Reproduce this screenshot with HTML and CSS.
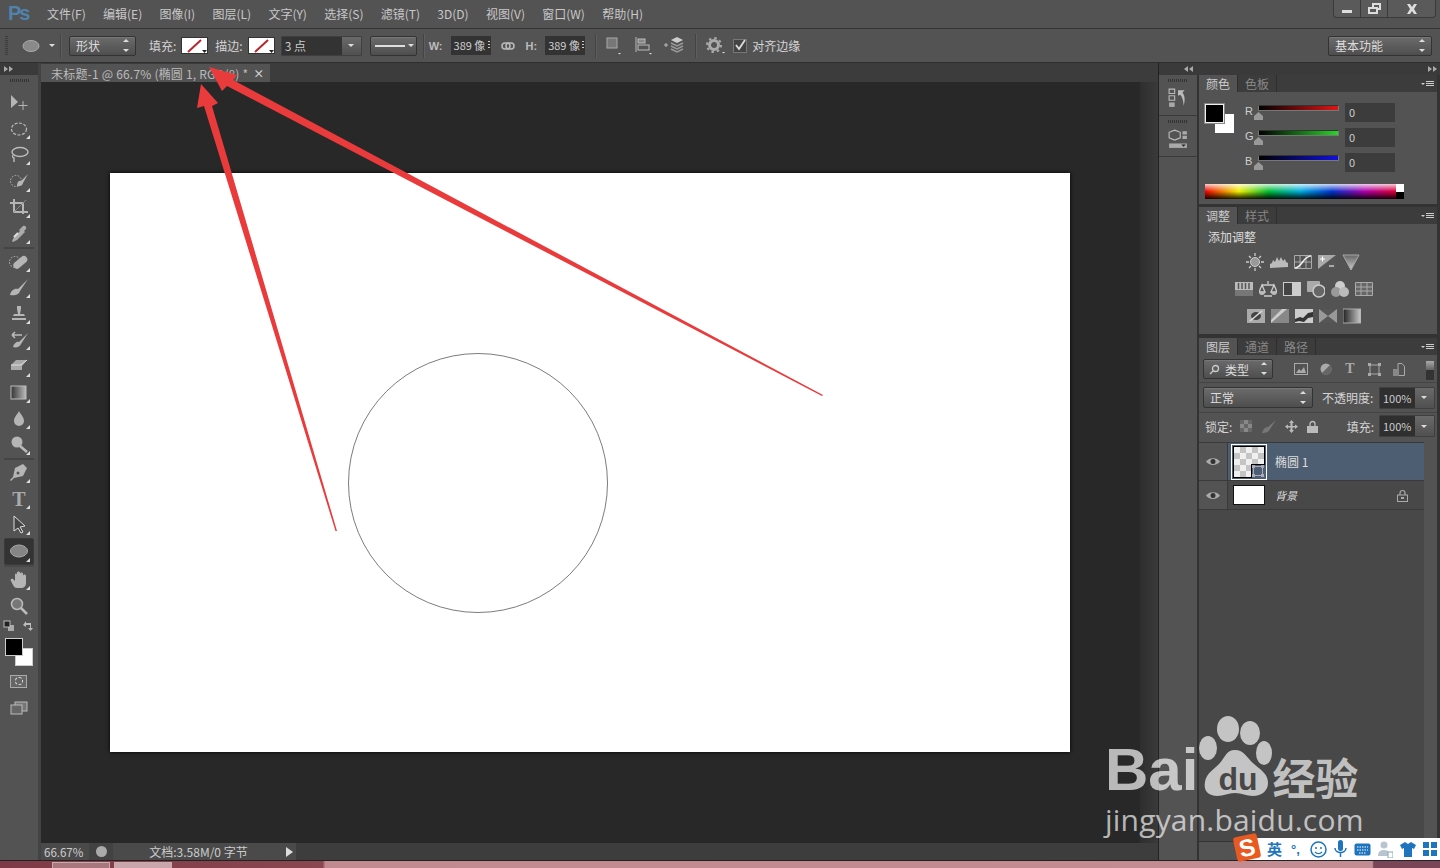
FILE: index.html
```html
<!DOCTYPE html>
<html lang="zh-CN">
<head>
<meta charset="utf-8">
<title>Photoshop</title>
<link rel="stylesheet" href="styles.css">
</head>
<body>
<div class="app">
  <header class="menubar">
    <span class="logo">Ps</span>
    <nav class="menu">
      <span>文件(F)</span><span>编辑(E)</span><span>图像(I)</span><span>图层(L)</span><span>文字(Y)</span><span>选择(S)</span><span>滤镜(T)</span><span>3D(D)</span><span>视图(V)</span><span>窗口(W)</span><span>帮助(H)</span>
    </nav>
    <div class="winbtns">
      <span class="winbtn"><svg width="12" height="10" viewBox="0 0 12 10"><rect x="1" y="6" width="10" height="3" fill="#ddd"/></svg></span>
      <span class="winbtn"><svg width="13" height="11" viewBox="0 0 13 11"><path d="M4 0h9v7h-3v4H0V4h4zM6 2v2h4v1h1V2zM2 6v3h6V6z" fill="#ddd"/></svg></span>
      <span class="winbtn wide"><svg width="12" height="10" viewBox="0 0 12 10"><path d="M1 0h3l2 3 2-3h3L8 5l3 5H8L6 7l-2 3H1l3-5z" fill="#ddd"/></svg></span>
    </div>
  </header>

  <section class="optbar">
    <span class="grip-v"></span>
    <svg class="opt-shape" width="18" height="12" viewBox="0 0 18 12"><ellipse cx="9" cy="6" rx="8" ry="5.500" fill="#8a8a8a" stroke="#aaa"/></svg>
    <span class="caret opt-caret"></span>
    <span class="vsep sep-a"></span>
    <span class="select sel-shape">形状<i class="updown"></i></span>
    <span class="label lab-fill">填充:</span>
    <span class="swatch"><svg width="26" height="16" viewBox="0 0 26 16"><rect width="26" height="16" fill="#fff"/><path d="M6 14 19 2" stroke="#b5272d" stroke-width="2"/><path d="M20 12h5l-2.500 3z" fill="#222"/></svg></span>
    <span class="label lab-stroke">描边:</span>
    <span class="swatch"><svg width="26" height="16" viewBox="0 0 26 16"><rect width="26" height="16" fill="#fff"/><path d="M6 14 19 2" stroke="#b5272d" stroke-width="2"/><path d="M20 12h5l-2.500 3z" fill="#222"/></svg></span>
    <span class="combo combo-stroke"><span class="combo-val">3 点</span><span class="combo-btn"><i class="caret"></i></span></span>
    <span class="select sel-line"><i class="line"></i><i class="caret"></i></span>
    <span class="vsep sep-b"></span>
    <span class="label lab-w">W:</span>
    <span class="field">389 像</span>
    <svg class="opt-link" width="14" height="10" viewBox="0 0 14 10"><rect x="1" y="2" width="8" height="6" rx="3" fill="none" stroke="#bbb" stroke-width="1.500"/><rect x="5" y="2" width="8" height="6" rx="3" fill="none" stroke="#bbb" stroke-width="1.500"/></svg>
    <span class="label lab-h">H:</span>
    <span class="field">389 像</span>
    <span class="vsep sep-c"></span>
    <svg class="opt-ic1" width="16" height="18" viewBox="0 0 16 18"><rect x="1" y="1" width="10" height="10" fill="#777" stroke="#aaa"/><path d="M12 16h3l-1.500 1.500z" fill="#ddd"/></svg>
    <svg class="opt-ic2" width="18" height="18" viewBox="0 0 18 18"><path d="M1 0v15" stroke="#bbb"/><rect x="3" y="2" width="7" height="4" fill="#888" stroke="#bbb"/><rect x="3" y="8" width="11" height="5" fill="#555" stroke="#bbb"/><path d="M14 16h3l-1.500 1.500z" fill="#ddd"/></svg>
    <svg class="opt-ic3" width="22" height="18" viewBox="0 0 22 18"><path d="M1 8h4M3 6v4" stroke="#bbb"/><path d="M14 0l6 3-6 3-6-3z" fill="#ccc"/><path d="M8 6l6 3 6-3M8 9l6 3 6-3M8 12l6 3 6-3" fill="none" stroke="#999" stroke-width="1.500"/></svg>
    <span class="vsep sep-d"></span>
    <svg class="opt-gear" width="20" height="18" viewBox="0 0 20 18"><circle cx="8" cy="8" r="4.500" fill="none" stroke="#aaa" stroke-width="3"/><circle cx="8" cy="8" r="7" fill="none" stroke="#aaa" stroke-width="2" stroke-dasharray="2.500 3"/><path d="M16 15h3l-1.500 1.500z" fill="#ddd"/></svg>
    <span class="check"><svg width="14" height="14" viewBox="0 0 14 14"><path d="M3 6l3 4 6-9" fill="none" stroke="#ddd" stroke-width="1.800"/></svg></span>
    <span class="label lab-align">对齐边缘</span>
    <span class="select sel-work">基本功能<i class="updown"></i></span>
  </section>

  <main class="workspace">
    <aside class="tools">
      <div class="strip"><i class="tri-r"></i><i class="tri-r"></i></div>
      <div class="grip-h tools-grip"></div>
      <div class="toollist">
        <span class="tool"><svg viewBox="0 0 20 20"><path d="M2 2v13l7-6z"/><path d="M14 8v9M9.500 12.500h9" stroke="#b5b5b5"/></svg></span>
        <span class="tool corner"><svg viewBox="0 0 20 20"><ellipse cx="10" cy="10" rx="7.500" ry="6" fill="none" stroke="#bbb" stroke-width="1.200" stroke-dasharray="3 1.500"/></svg></span>
        <span class="tool corner"><svg viewBox="0 0 20 20"><ellipse cx="11" cy="7" rx="8" ry="4.500" fill="none" stroke="#bbb" stroke-width="1.400"/><path d="M4 10c-1 2 0 3 1 3v4" fill="none" stroke="#bbb" stroke-width="1.400"/></svg></span>
        <span class="tool corner"><svg viewBox="0 0 20 20"><circle cx="7" cy="10" r="5.500" fill="none" stroke="#bbb" stroke-dasharray="1.500 1.500"/><path d="M19 3 12 10c-2-1-4 1-4 5 3 1 6-1 6-3z"/></svg></span>
        <span class="tool corner"><svg viewBox="0 0 20 20"><path d="M1 5h13v11M5 1v13h14" fill="none" stroke="#b5b5b5" stroke-width="2"/><path d="M17 2 4 15" stroke="#888"/></svg></span>
        <span class="tool corner"><svg viewBox="0 0 20 20"><path d="M14 2c2-1 4 1 3 3l-2 2 1 1-2 2-6 6-4 2-1-1 2-4 6-6-1-1 2-2z" fill="#aaa"/><path d="M5 13l4-4" stroke="#ddd" stroke-width="2"/></svg></span>
        <span class="toolsep"></span>
        <span class="tool corner"><svg viewBox="0 0 20 20"><circle cx="6" cy="10" r="5.500" fill="none" stroke="#bbb" stroke-dasharray="1.500 1.500"/><rect x="3" y="7" width="16" height="7" rx="3.500" transform="rotate(-40 11 10)"/></svg></span>
        <span class="tool corner"><svg viewBox="0 0 20 20"><path d="M19 1 9 11c-3-1-7 1-8 6 4 1 9 0 10-4z"/></svg></span>
        <span class="tool corner"><svg viewBox="0 0 20 20"><path d="M8 2h4v3l-1 5h4l1 2H4l1-2h4L8 5zM3 14h14v2H3z"/></svg></span>
        <span class="tool corner"><svg viewBox="0 0 20 20"><path d="M19 3 10 12c-2-1-5 1-6 5 3 1 7 0 8-3z"/><path d="M3 5h10M3 5l3-3M3 5l3 3" fill="none" stroke="#bbb" stroke-width="1.500"/></svg></span>
        <span class="tool corner"><svg viewBox="0 0 20 20"><path d="M7 4h11l-5 6v4H2V9z" fill="#aaa"/><path d="M2 9h10l6-5" fill="none" stroke="#ddd"/></svg></span>
        <span class="tool corner"><svg viewBox="0 0 20 20"><defs><linearGradient id="gr"><stop offset="0" stop-color="#333"/><stop offset="1" stop-color="#bbb"/></linearGradient></defs><rect x="2" y="3" width="15" height="13" fill="url(#gr)" stroke="#bbb"/></svg></span>
        <span class="tool corner"><svg viewBox="0 0 20 20"><path d="M10 2c2 4 5 6 5 10a5 5 0 0 1-10 0c0-4 3-6 5-10z"/></svg></span>
        <span class="tool corner"><svg viewBox="0 0 20 20"><circle cx="8" cy="7" r="5.500"/><path d="M11 11l7 6" stroke="#bbb" stroke-width="2.500"/></svg></span>
        <span class="toolsep"></span>
        <span class="tool corner"><svg viewBox="0 0 20 20"><path d="M15 2 18 5 14 13 5 15 2 18l-1-1 3-3 2-9 8-4z"/><circle cx="9" cy="10" r="1.500" fill="#555"/></svg></span>
        <span class="tool corner tool-t">T</span>
        <span class="tool corner"><svg viewBox="0 0 20 20"><path d="M5 1v15l4-3 3 5 2-1-3-5 5-1z" fill="#444" stroke="#ddd"/></svg></span>
        <span class="tool corner active"><svg viewBox="0 0 20 20"><ellipse cx="10" cy="10" rx="8.500" ry="6" fill="#858585" stroke="#aaa"/></svg></span>
        <span class="toolsep light"></span>
        <span class="tool corner"><svg viewBox="0 0 20 20"><path d="M2 11c-1-1 0-3 2-2l2 2V5c0-2 2-2 2 0V3c0-2 3-2 3 0v1c0-2 3-2 3 0v2c0-2 3-2 3 0v7c0 3-2 5-5 5H8c-2 0-3-1-4-3z"/></svg></span>
        <span class="tool"><svg viewBox="0 0 20 20"><circle cx="8" cy="8" r="5.500" fill="#777" stroke="#bbb" stroke-width="1.500"/><path d="M12 12l6 6" stroke="#bbb" stroke-width="2.500"/></svg></span>
      </div>
      <div class="swap-row">
        <svg width="12" height="12" viewBox="0 0 12 12"><rect x="5" y="5" width="6" height="6" fill="#aaa"/><rect x="1" y="1" width="6" height="6" fill="#222" stroke="#bbb"/></svg>
        <svg width="12" height="12" viewBox="0 0 12 12"><path d="M1 5 4 1v2h5v5h2L8.500 11 6 8h2V5H4v2z" fill="#bbb"/></svg>
      </div>
      <div class="colors"><span class="col-bg"></span><span class="col-fg"></span></div>
      <div class="mask"><i></i></div>
      <svg class="screen" width="18" height="14" viewBox="0 0 18 14"><rect x="5" y="1" width="12" height="9" fill="#777" stroke="#bbb"/><rect x="1" y="4" width="11" height="9" fill="#666" stroke="#bbb"/></svg>
    </aside>

    <section class="doc">
      <div class="tabstrip">
        <div class="doctab"><span>未标题-1 @ 66.7% (椭圆 1, RGB/8) *</span><b>×</b></div>
      </div>
      <div class="docbody">
        <div class="pasteboard">
          <div class="canvas">
            <svg class="circle" width="262" height="262" viewBox="0 0 262 262"><circle cx="130" cy="130" r="129.500" fill="none" stroke="#444" stroke-width=".7"/></svg>
          </div>
        </div>
        <div class="vscroll"></div>
      </div>
      <div class="status">
        <div class="status-box">
          <span class="zoomval">66.67%</span>
          <span class="status-cell"><i class="status-ic"></i></span>
          <span class="docinfo">文档:3.58M/0 字节</span>
          <i class="tri-status"></i>
        </div>
        <div class="hscroll"></div>
      </div>
    </section>

    <aside class="rightdock">
      <div class="strip strip-right"><span class="tri-group"><i class="tri-l"></i><i class="tri-l"></i></span><span class="tri-group"><i class="tri-r"></i><i class="tri-r"></i></span></div>
      <div class="rightbody">
        <div class="iconcol">
          <div class="iconcell">
            <div class="grip-h"></div>
            <svg width="18" height="18" viewBox="0 0 18 18"><path d="M1 1h5v4H1zM1 7h5v4H1z" fill="none" stroke="#bbb"/><rect x="1" y="13" width="5" height="4" fill="#aaa"/><path d="M9 2h6l-2 2c3 4 2 9 1 12 0-4-1-8-3-10l-2 1z" fill="#bbb"/></svg>
          </div>
          <div class="iconcell">
            <div class="grip-h"></div>
            <svg width="18" height="18" viewBox="0 0 18 18"><path d="M6 1l5 2v5l-5 2-5-2V3z" fill="none" stroke="#bbb"/><path d="M13 2h4v3h-4zM13 6h4v3h-4z" fill="#aaa"/><rect x="1" y="13" width="16" height="4" fill="#aaa"/><path d="M12 14h4l-2 2z" fill="#222"/></svg>
          </div>
        </div>

        <div class="panels">
          <section class="panel panel-color">
            <div class="tabs"><span class="tab on">颜色</span><span class="tab">色板</span><i class="pmenu"></i></div>
            <div class="color-main">
              <div class="color-swatch"><span class="cs-bg"></span><span class="cs-fg"></span></div>
              <div class="sliders">
                <div class="slider"><span class="s-label">R</span><span class="track"><i class="t-r"></i><b></b></span><span class="val">0</span></div>
                <div class="slider"><span class="s-label">G</span><span class="track"><i class="t-g"></i><b></b></span><span class="val">0</span></div>
                <div class="slider"><span class="s-label">B</span><span class="track"><i class="t-b"></i><b></b></span><span class="val">0</span></div>
              </div>
            </div>
            <div class="spectrum"><div class="spec-bw"></div></div>
          </section>

          <section class="panel panel-adjust">
            <div class="tabs"><span class="tab on">调整</span><span class="tab">样式</span><i class="pmenu"></i></div>
            <div class="adj-title">添加调整</div>
            <div class="adj-row adj-first">
              <svg class="adj" viewBox="0 0 18 18"><circle cx="9" cy="9" r="4.500" fill="#999" stroke="#ccc"/><path d="M9 0v3M9 15v3M0 9h3M15 9h3M3 3l2 2M13 13l2 2M3 15l2-2M13 5l2-2" stroke="#ccc" stroke-width="1.300"/></svg>
              <svg class="adj" viewBox="0 0 18 18"><path d="M0 15V11l2-1 1-3 2 2 2-5 2 4 2-4 2 4 2-2 1 3 2 1v4z" fill="#bbb"/></svg>
              <svg class="adj" viewBox="0 0 18 18"><path d="M.5 2.500h17v13H.5zM6 2.500v13M12 2.500v13M.5 9h17" fill="none" stroke="#aaa"/><path d="M1 15c7 0 8-12 16-12" fill="none" stroke="#eee" stroke-width="1.500"/></svg>
              <svg class="adj" viewBox="0 0 18 18"><rect y="2" width="18" height="14" fill="#aaa"/><path d="M18 2v14H0z" fill="#555"/><path d="M2 6h5M4.500 3.500v5M11 13h5" stroke="#fff"/></svg>
              <svg class="adj" viewBox="0 0 18 18"><defs><linearGradient id="vb" x1="0" y1="0" x2="0" y2="1"><stop offset="0" stop-color="#666"/><stop offset="1" stop-color="#ccc"/></linearGradient></defs><path d="M1 2h16L9 17z" fill="url(#vb)" stroke="#aaa"/></svg>
            </div>
            <div class="adj-row adj-second">
              <svg class="adj" viewBox="0 0 18 18"><rect y="2" width="18" height="14" fill="#bbb"/><path d="M3.500 3v6M7 3v6M10.500 3v6M14 3v6" stroke="#555" stroke-width="1.500"/><rect y="10" width="18" height="6" fill="#777"/></svg>
              <svg class="adj" viewBox="0 0 18 18"><path d="M9 1v3M3 5h12M3 5 0 12h6zM15 5l-3 7h6zM5 16h8" fill="none" stroke="#ccc" stroke-width="1.300"/><path d="M0 12a3 3 0 0 0 6 0zM12 12a3 3 0 0 0 6 0z" fill="#bbb"/></svg>
              <svg class="adj" viewBox="0 0 18 18"><rect y="2" width="18" height="14" fill="#ccc"/><rect x="1" y="3" width="8" height="12" fill="#444"/></svg>
              <svg class="adj" viewBox="0 0 18 18"><rect y="1" width="13" height="11" rx="1" fill="#aaa"/><circle cx="12" cy="11" r="6" fill="#666" stroke="#ccc" stroke-width="1.500"/></svg>
              <svg class="adj" viewBox="0 0 18 18"><circle cx="9" cy="6" r="5" fill="#ccc"/><circle cx="5" cy="12" r="5" fill="#999"/><circle cx="13" cy="12" r="5" fill="#bbb"/></svg>
              <svg class="adj" viewBox="0 0 18 18"><path d="M.5 2.500h17v13H.5zM6 2.500v13M12 2.500v13M.5 7h17M.5 11h17" fill="#666" stroke="#aaa"/></svg>
            </div>
            <div class="adj-row adj-third">
              <svg class="adj" viewBox="0 0 18 18"><rect y="2" width="18" height="14" fill="#aaa"/><ellipse cx="9" cy="9" rx="5" ry="4" fill="#444"/><path d="M3 14 15 4" stroke="#ddd" stroke-width="1.500"/></svg>
              <svg class="adj" viewBox="0 0 18 18"><rect y="2" width="18" height="14" fill="#888"/><path d="M0 13 11 2h5L0 16z" fill="#ccc"/></svg>
              <svg class="adj" viewBox="0 0 18 18"><rect y="2" width="18" height="14" fill="#ccc"/><path d="M0 12l5-2 3 1 5-5 5-1v5l-5 1-4 4-5-1-4 1z" fill="#333"/></svg>
              <svg class="adj" viewBox="0 0 18 18"><rect y="2" width="18" height="14" fill="#999"/><path d="M0 2h18L0 16h18z" fill="#555"/></svg>
              <svg class="adj" viewBox="0 0 18 18"><defs><linearGradient id="gm"><stop offset="0" stop-color="#222"/><stop offset="1" stop-color="#ccc"/></linearGradient></defs><rect y="2" width="18" height="14" fill="url(#gm)" stroke="#aaa"/></svg>
            </div>
          </section>

          <section class="panel panel-layers">
            <div class="tabs"><span class="tab on">图层</span><span class="tab">通道</span><span class="tab">路径</span><i class="pmenu"></i></div>
            <div class="l-filter">
              <span class="select sel-filter"><svg width="11" height="11" viewBox="0 0 11 11"><circle cx="6.500" cy="4.500" r="3" fill="none" stroke="#ccc" stroke-width="1.300"/><path d="M4 7 1 10" stroke="#ccc" stroke-width="1.300"/></svg><span class="sel-filter-t">类型</span><i class="updown"></i></span>
              <div class="l-ficons">
                <svg width="14" height="12" viewBox="0 0 14 12"><rect x=".5" y=".5" width="13" height="11" fill="none" stroke="#aaa"/><path d="M2 10l3-4 2 2 3-4 2 6z" fill="#aaa"/></svg>
                <svg width="12" height="12" viewBox="0 0 12 12"><circle cx="6" cy="6" r="5.500" fill="#aaa"/><path d="M10 2a5.500 5.500 0 0 1-8 8z" fill="#666"/></svg>
                <span class="f-t">T</span>
                <svg width="13" height="13" viewBox="0 0 13 13"><rect x="2" y="2" width="9" height="9" fill="none" stroke="#aaa"/><path d="M0 0h3v3H0zM10 0h3v3h-3zM0 10h3v3H0zM10 10h3v3h-3z" fill="#aaa"/></svg>
                <svg width="12" height="13" viewBox="0 0 12 13"><path d="M5 .5h4l2.500 3V12.500H5z" fill="none" stroke="#aaa"/><rect y="6" width="6" height="7" fill="#888"/></svg>
              </div>
              <span class="l-toggle"></span>
            </div>
            <div class="l-blend">
              <span class="select sel-blend">正常<i class="updown"></i></span>
              <span class="label">不透明度:</span>
              <span class="combo combo-pct"><span class="combo-val">100%</span><span class="combo-btn"><i class="caret"></i></span></span>
            </div>
            <div class="l-lock">
              <span class="label">锁定:</span>
              <span class="lock-icons">
                <svg width="12" height="12" viewBox="0 0 12 12"><rect width="12" height="12" fill="#888"/><path d="M0 0h4v4H0zM8 0h4v4H8zM4 4h4v4H4zM0 8h4v4H0zM8 8h4v4H8z" fill="#666"/></svg>
                <svg width="15" height="13" viewBox="0 0 15 13"><path d="M15 0 7 7C4 7 2 9 1 13c4 0 7-1 8-4z" fill="#777"/></svg>
                <svg width="13" height="13" viewBox="0 0 13 13"><path d="M6.500 0 9 3H7.500v3H10V4.500L13 6.500 10 9V7.500H7.500V10H9L6.500 13 4 10h1.500V7.500H3V9L0 6.500 3 4.500V6h2.500V3H4z" fill="#bbb"/></svg>
                <svg width="11" height="13" viewBox="0 0 11 13"><path d="M3 6V4a2.500 2.500 0 0 1 5 0v2" fill="none" stroke="#bbb" stroke-width="1.300"/><rect y="6" width="11" height="7" fill="#bbb"/></svg>
              </span>
              <span class="label lab-fill2">填充:</span>
              <span class="combo combo-pct"><span class="combo-val">100%</span><span class="combo-btn"><i class="caret"></i></span></span>
            </div>
            <div class="l-list">
              <div class="layer selected">
                <span class="eye"><svg width="14" height="9" viewBox="0 0 14 9"><path d="M0 4.500C3 0 11 0 14 4.500 11 9 3 9 0 4.500z" fill="#aaa"/><circle cx="7" cy="4.500" r="2.500" fill="#333"/></svg></span>
                <span class="thumb thumb-check"><i class="thumb-mask"></i><svg class="thumb-vec" width="12" height="12" viewBox="0 0 12 12"><rect x="1.500" y="1.500" width="9" height="9" fill="none" stroke="#aab"/><path d="M0 0h3v3H0zM9 0h3v3H9zM0 9h3v3H0zM9 9h3v3H9z" fill="#aab"/></svg></span>
                <span class="lname">椭圆 1</span>
              </div>
              <div class="layer">
                <span class="eye"><svg width="14" height="9" viewBox="0 0 14 9"><path d="M0 4.500C3 0 11 0 14 4.500 11 9 3 9 0 4.500z" fill="#aaa"/><circle cx="7" cy="4.500" r="2.500" fill="#333"/></svg></span>
                <span class="thumb thumb-white"></span>
                <span class="lname lname-bg">背景</span>
                <svg class="lname-lock" width="11" height="13" viewBox="0 0 11 13"><path d="M3 6V4a2.500 2.500 0 0 1 5 0v2" fill="none" stroke="#aaa" stroke-width="1.200"/><rect x=".5" y="6" width="10" height="6.500" fill="none" stroke="#aaa"/><rect x="4" y="8" width="3" height="2" fill="#aaa"/></svg>
              </div>
            </div>
            <div class="l-foot"></div>
          </section>
        </div>
      </div>
    </aside>
  </main>

  <footer class="taskbar">
    <span class="task-btn"></span>
    <span class="task-btn task-active"></span>
  </footer>

  <svg class="arrows" width="1440" height="868" viewBox="0 0 1440 868">
    <path d="M337 531 212 106 218 103 201 84 197 108 204 106 335.500 531z" fill="#ea3b3c"/>
    <path d="M823 395 233 80 237 75 209 67 222 91 227 86 822 396z" fill="#ea3b3c"/>
  </svg>

  <div class="watermark">
    <div class="wm-top">
      <span class="wm-bai">Bai</span>
      <span class="wm-paw"><svg width="74" height="82" viewBox="0 0 74 82"><ellipse cx="30" cy="13" rx="11" ry="13"/><ellipse cx="52" cy="17" rx="10" ry="12"/><ellipse cx="10" cy="32" rx="9" ry="12"/><ellipse cx="66" cy="37" rx="8" ry="12"/><path d="M37 34c9 0 12 8 19 14 7 6 14 10 14 19 0 9-8 13-15 13-7 0-11-3-18-3s-11 3-18 3C12 80 5 76 7 66c1-8 8-12 14-18 6-6 7-14 16-14z"/></svg><span class="wm-du">du</span></span>
      <span class="wm-jy">经验</span>
    </div>
    <div class="wm-url">jingyan.baidu.com</div>
  </div>

  <div class="imebar">
    <span class="ime-s">S</span>
    <span class="ime-t">英</span>
    <span class="ime-p">°,</span>
    <svg width="17" height="17" viewBox="0 0 17 17"><circle cx="8.500" cy="8.500" r="7.500" fill="none" stroke="#1e74bd" stroke-width="1.500"/><circle cx="6" cy="7" r="1" fill="#1e74bd"/><circle cx="11" cy="7" r="1" fill="#1e74bd"/><path d="M5 11c2 2 5 2 7 0" fill="none" stroke="#1e74bd" stroke-width="1.300"/></svg>
    <svg width="13" height="18" viewBox="0 0 13 18"><rect x="4" y="0" width="5" height="11" rx="2.500" fill="#1e74bd"/><path d="M1 8c0 6 11 6 11 0M6.500 13v4" fill="none" stroke="#1e74bd" stroke-width="1.500"/></svg>
    <svg width="17" height="13" viewBox="0 0 17 13"><rect x=".5" y=".5" width="16" height="12" rx="2" fill="#1e74bd"/><path d="M3 4h11M3 7h11M5 10h7" stroke="#fff" stroke-dasharray="1.500 1"/></svg>
    <svg width="15" height="17" viewBox="0 0 15 17"><circle cx="6" cy="4" r="3.500" fill="#b8c4d0"/><path d="M0 15c0-5 3-6 6-6s5 1 5 3v3z" fill="#b8c4d0"/><rect x="10" y="11" width="5" height="6" fill="#fff" stroke="#8aa"/></svg>
    <svg width="16" height="15" viewBox="0 0 16 15"><path d="M5 0l3 2 3-2 5 3-2 4-2-1v9H4V6L2 7 0 3z" fill="#1e74bd"/></svg>
    <svg width="14" height="14" viewBox="0 0 14 14"><path d="M0 0h6v6H0zM8 0h6v6H8zM0 8h6v6H0zM8 8h6v6H8z" fill="#1e74bd"/></svg>
  </div>
</div>
</body>
</html>
```
FILE: styles.css
```css
* { box-sizing: border-box; }
html, body { margin: 0; padding: 0; height: 100%; overflow: hidden; }
body {
  font-family: "Noto Sans CJK SC", "Liberation Sans", sans-serif;
  font-size: 12px;
  color: #d0d0d0;
  background: #535353;
}
i, b { font-style: normal; font-weight: normal; }
svg { display: block; flex: none; }

.app { position: relative; width: 1440px; height: 868px; display: flex; flex-direction: column; overflow: hidden; }

/* menu */
.menubar { height: 29px; flex: none; display: flex; align-items: flex-start; background: #535353; border-bottom: 1px solid #333; }
.logo { width: 47px; padding-left: 8px; font: bold 20px/26px "Liberation Sans", sans-serif; letter-spacing: -2px; color: #4f82ad; }
.menu { display: flex; gap: 17.300px; line-height: 27px; color: #c8c8c8; font-size: 12px; white-space: nowrap; }
.winbtns { margin-left: auto; margin-right: 4px; display: flex; height: 18px; border: 1px solid #3a3a3a; border-top: 0; border-radius: 0 0 4px 4px; background: #5a5a5a; }
.winbtn { width: 27px; display: flex; align-items: center; justify-content: center; border-right: 1px solid #3a3a3a; }
.winbtn.wide { width: 47px; border-right: 0; }

/* options bar */
.optbar { height: 34px; flex: none; display: flex; align-items: center; background: #535353; border-bottom: 1px solid #2e2e2e; }
.optbar > * { flex: none; }
.grip-v { width: 3px; height: 20px; margin-left: 5px; background: repeating-linear-gradient(#3c3c3c 0 1px, transparent 1px 2px); }
.opt-shape { margin-left: 14px; }
.caret { display: inline-block; width: 0; height: 0; border: 3px solid transparent; border-top: 3px solid #ddd; border-bottom: 0; }
.opt-caret { margin-left: 9px; }
.vsep { width: 1px; height: 24px; background: #444; box-shadow: 1px 0 0 #5e5e5e; }
.sep-a { margin-left: 5px; }
.select { display: flex; align-items: center; height: 20px; padding: 0 6px; background: linear-gradient(#6b6b6b, #4e4e4e); border: 1px solid #333; border-radius: 2px; color: #ddd; position: relative; box-shadow: inset 0 1px 0 #777; }
.updown { margin-left: auto; width: 6px; height: 10px; flex: none; position: relative; }
.updown::before, .updown::after { content: ""; position: absolute; left: 0; border: 3px solid transparent; }
.updown::before { top: -2px; border-bottom-color: #ddd; border-top: 0; }
.updown::after { bottom: -1px; border-top-color: #ddd; border-bottom: 0; }
.sel-shape { width: 67px; margin-left: 8px; }
.label { color: #d4d4d4; white-space: nowrap; }
.lab-fill { margin-left: 13px; }
.swatch { margin-left: 5px; width: 27px; height: 17px; border: 1px solid #333; overflow: hidden; }
.lab-stroke { margin-left: 7px; }
.combo { display: flex; height: 20px; border: 1px solid #3f3f3f; border-radius: 1px; }
.combo-val { background: #333; padding-left: 3px; color: #ccc; display: flex; align-items: center; }
.combo-btn { background: linear-gradient(#6a6a6a, #505050); display: flex; align-items: center; justify-content: center; }
.combo-stroke { margin-left: 6px; width: 81px; }
.combo-stroke .combo-val { width: 62px; }
.combo-stroke .combo-btn { width: 19px; }
.sel-line { width: 47px; margin-left: 8px; padding: 0 4px; }
.line { width: 30px; height: 2px; background: #ddd; margin-right: 3px; flex: none; }
.sep-b { margin-left: 6px; }
.lab-w { margin-left: 5px; font-family: "Liberation Sans", sans-serif; font-weight: bold; color: #bbb; font-size: 11px; }
.field { position: relative; width: 40px; height: 19px; margin-left: 8px; background: #333; color: #ccc; font-size: 11px; line-height: 19px; padding-left: 3px; white-space: nowrap; }
.field::after { content: ""; position: absolute; right: 1px; top: 5px; width: 2px; height: 9px; background: repeating-linear-gradient(#ccc 0 1px, transparent 1px 3px); }
.opt-link { margin-left: 10px; }
.lab-h { margin-left: 11px; font-family: "Liberation Sans", sans-serif; font-weight: bold; color: #bbb; font-size: 11px; }
.lab-h + .field { margin-left: 8px; }
.sep-c { margin-left: 10px; }
.opt-ic1 { margin-left: 10px; }
.opt-ic2 { margin-left: 13px; }
.opt-ic3 { margin-left: 10px; }
.sep-d { margin-left: 10px; }
.opt-gear { margin-left: 10px; }
.check { margin-left: 7px; width: 14px; height: 14px; background: #444; border: 1px solid #777; }
.check svg { margin: -1px; }
.lab-align { margin-left: 5px; }
.sel-work { margin-left: auto; margin-right: 8px; width: 104px; }

/* workspace */
.workspace { flex: 1; min-height: 0; display: flex; background: #333; }
.tools { width: 41px; flex: none; background: #535353; border-right: 3px solid #434343; display: flex; flex-direction: column; }
.strip { height: 12px; flex: none; background: #3a3a3a; display: flex; align-items: center; padding: 0 4px; gap: 1px; }
.tri-r, .tri-l { width: 0; height: 0; border: 3px solid transparent; }
.tri-r { border-left: 4px solid #aaa; border-right: 0; }
.tri-l { border-right: 4px solid #aaa; border-left: 0; }
.grip-h { height: 3px; width: 20px; margin: 4px auto 0; background: repeating-linear-gradient(90deg, #333 0 1px, transparent 1px 2px); flex: none; }
.tools-grip { margin-left: 10px; }
.toollist { display: flex; flex-direction: column; margin-top: 8px; align-items: flex-start; }
.tool { position: relative; width: 30px; height: 26.150px; margin-left: 4px; flex: none; display: flex; align-items: center; justify-content: center; }
.tool svg { width: 20px; height: 20px; fill: #b5b5b5; }
.tool.corner::after { content: ""; position: absolute; right: 4px; bottom: 3px; border: 2px solid transparent; border-right-color: #ddd; border-bottom-color: #ddd; }
.tool.active { background: #333; border: 1px solid #3a3a3a; border-radius: 2px; }
.tool.active::after { right: 3px; bottom: 2px; }
.tool-t { font: bold 20px/26px "Liberation Serif", serif; color: #aaa; }
.toolsep { width: 30px; height: 2px; margin: 0 0 0 4px; background: #444; flex: none; }
.toolsep.light { background: #494949; }
.swap-row { display: flex; gap: 7px; margin: 1px 0 0 3px; }
.colors { position: relative; height: 40px; flex: none; }
.col-fg, .col-bg { position: absolute; width: 18px; height: 18px; border: 1px solid #ccc; }
.col-fg { left: 5px; top: 6px; background: #000; }
.col-bg { left: 15px; top: 16px; background: #fff; }
.mask { width: 17px; height: 13px; margin: 3px 0 0 10px; background: #666; border: 1px solid #aaa; display: flex; align-items: center; justify-content: center; flex: none; }
.mask i { width: 8px; height: 8px; border-radius: 50%; border: 1px dashed #ddd; }
.screen { margin: 13px 0 0 10px; }

.doc { flex: 1; min-width: 0; display: flex; flex-direction: column; background: #282828; }
.tabstrip { height: 19px; flex: none; background: #3c3c3c; display: flex; }
.doctab { width: 229px; margin-top: 1px; background: #535353; color: #bbb; display: flex; align-items: center; font-size: 12px; letter-spacing: .2px; padding-left: 10px; white-space: nowrap; }
.doctab b { margin-left: 5px; color: #ccc; font-size: 11px; font-weight: bold; }
.docbody { flex: 1; min-height: 0; display: flex; }
.pasteboard { flex: 1; padding: 91px 0 0 69px; }
.canvas { position: relative; width: 960px; height: 579px; background: #fff; box-shadow: 0 0 4px #000; }
.circle { position: absolute; left: 238px; top: 180px; }
.vscroll { width: 18px; flex: none; background: linear-gradient(90deg, #2e2e2e, #3a3a3a); }
.status { height: 17px; flex: none; display: flex; background: #3d3d3d; }
.status-box { width: 255px; flex: none; background: #4a4a4a; display: flex; align-items: center; color: #ccc; font-size: 11.500px; white-space: nowrap; }
.zoomval { width: 48px; padding-left: 3px; flex: none; }
.status-cell { width: 24px; height: 17px; flex: none; background: #424242; display: flex; align-items: center; justify-content: center; }
.status-ic { width: 11px; height: 11px; border-radius: 50%; background: #aaa; }
.docinfo { width: 171px; flex: none; text-align: center; font-size: 12px; }
.tri-status { width: 0; height: 0; border: 5px solid transparent; border-left: 7px solid #ddd; border-right: 0; margin-left: 2px; flex: none; }
.hscroll { flex: 1; }

.rightdock { width: 282px; flex: none; display: flex; flex-direction: column; background: #333; border-left: 1px solid #222; }
.strip-right { justify-content: space-between; padding: 0 3px 0 25px; }
.tri-group { display: flex; gap: 1px; }
.rightbody { flex: 1; min-height: 0; display: flex; }
.iconcol { width: 40px; flex: none; background: #535353; border-right: 2px solid #333; }
.iconcell { height: 41px; border-bottom: 1px solid #3a3a3a; display: flex; flex-direction: column; align-items: center; gap: 6px; }
.iconcol .iconcell svg { width: 20px; height: 20px; }
.panels { width: 238px; flex: none; display: flex; flex-direction: column; min-height: 0; }
.panel { background: #535353; border-bottom: 1px solid #333; flex: none; }
.panel-color { height: 130px; }
.panel-adjust { height: 128px; margin-top: 2px; }
.panel-layers { flex: 1; min-height: 0; margin-top: 3px; border-bottom: 0; display: flex; flex-direction: column; }
.tabs { height: 17px; flex: none; background: #3c3c3c; display: flex; align-items: center; position: relative; }
.tab { height: 17px; padding: 0 7px; color: #888; border-right: 1px solid #2e2e2e; line-height: 17px; }
.tab.on { background: #535353; color: #ccc; }
.pmenu { position: absolute; right: 3px; top: 6px; width: 8px; height: 6px; background: repeating-linear-gradient(#ccc 0 1px, transparent 1px 2px); }
.pmenu::before { content: ""; position: absolute; left: -5px; top: 2px; border: 2.500px solid transparent; border-top-color: #ccc; border-bottom: 0; }

.color-main { display: flex; padding: 12px 0 0 6px; }
.color-swatch { position: relative; width: 40px; height: 40px; flex: none; }
.cs-fg, .cs-bg { position: absolute; width: 19px; height: 19px; }
.cs-fg { left: 0; top: 0; background: #000; border: 1px solid #eee; outline: 1px solid #888; }
.cs-bg { left: 10px; top: 10px; background: #fff; }
.sliders { display: flex; flex-direction: column; gap: 6px; margin-top: -1px; }
.slider { display: flex; height: 19px; }
.s-label { width: 13px; font-size: 11px; line-height: 17px; flex: none; font-family: "Liberation Sans", sans-serif; }
.track { position: relative; width: 81px; height: 18px; flex: none; }
.track i { position: absolute; left: 0; top: 2px; width: 81px; height: 6px; border: 1px solid #777; border-top-color: #333; }
.t-r { background: linear-gradient(90deg, #000, #e01515); }
.t-g { background: linear-gradient(90deg, #000, #28d528); }
.t-b { background: linear-gradient(90deg, #000, #1010e0); }
.track b { position: absolute; left: -4px; top: 9px; width: 9px; height: 8px; background: #999; clip-path: polygon(50% 0, 100% 50%, 100% 100%, 0 100%, 0 50%); }
.val { width: 50px; height: 19px; margin-left: 6px; background: #3c3c3c; padding-left: 4px; font-size: 11px; line-height: 19px; color: #ccc; flex: none; }
.spectrum { position: relative; width: 199px; height: 15px; margin: 12px 0 0 6px; background: linear-gradient(180deg, rgba(255,255,255,.8) 0, rgba(255,255,255,0) 50%, rgba(0,0,0,0) 50%, rgba(0,0,0,.9) 100%), linear-gradient(90deg, #e00 0, #ee0 17%, #0b3 32%, #0ad 48%, #03c 64%, #a0a 80%, #d03 96%); }
.spec-bw { position: absolute; right: 0; top: 0; width: 8px; height: 15px; background: linear-gradient(#fff 50%, #000 50%); }

.adj-title { padding: 4px 0 0 9px; color: #ddd; line-height: 18px; }
.adj-row { display: flex; gap: 6px; }
.adj-first { margin-top: 7px; padding-left: 47px; }
.adj-second { margin-top: 9px; padding-left: 36px; }
.adj-third { margin-top: 9px; padding-left: 48px; }
.adj { width: 18px; height: 18px; }

.l-filter { display: flex; align-items: flex-start; height: 28px; flex: none; padding: 4px 0 0 4px; position: relative; border-bottom: 1px solid #444; }
.sel-filter { width: 70px; gap: 5px; padding: 0 5px; color: #ddd; }
.l-ficons { display: flex; align-items: center; gap: 12px; margin-left: 21px; height: 20px; }
.f-t { font: bold 14px/14px "Liberation Serif", serif; color: #aaa; width: 12px; text-align: center; }
.l-toggle { position: absolute; right: 3px; top: 6px; width: 8px; height: 19px; background: linear-gradient(#aaa 0, #666 45%, #333 46%); }
.l-blend { display: flex; align-items: center; height: 30px; flex: none; padding: 0 2px 0 4px; border-bottom: 1px solid #444; }
.sel-blend { width: 110px; height: 21px; }
.l-blend .label { margin-left: 9px; }
.combo-pct { width: 56px; height: 22px; margin-left: auto; font-size: 11px; flex: none; }
.combo-pct .combo-val { width: 36px; background: #2f2f2f; }
.combo-pct .combo-btn { width: 20px; }
.l-lock { display: flex; align-items: center; height: 28px; flex: none; padding: 0 2px 2px 6px; }
.lock-icons { display: flex; align-items: center; gap: 9px; margin-left: 8px; }
.lab-fill2 { margin-left: auto; }
.l-lock .combo-pct { margin-left: 5px; }
.l-list { width: 225px; flex: 1; min-height: 0; margin-top: 1px; background: #484848; border-top: 1px solid #3a3a3a; }
.l-foot { height: 19px; flex: none; background: #535353; border-top: 1px solid #333; }
.layer { display: flex; align-items: center; position: relative; height: 29px; border-bottom: 1px solid #3a3a3a; }
.layer.selected { height: 38px; background: #4e5e72; }
.eye { width: 29px; height: 100%; flex: none; display: flex; align-items: center; justify-content: center; border-right: 1px solid #3a3a3a; background: #535353; }
.thumb { display: block; width: 32px; flex: none; margin-left: 5px; position: relative; }
.thumb-check { height: 32px; border: 1px solid #000; background: conic-gradient(#c4c4c4 25%, #f0f0f0 0 50%, #c4c4c4 0 75%, #f0f0f0 0) 0 0/12px 12px; outline: 1px solid #fff; outline-offset: 1px; }
.thumb-mask { position: absolute; right: -1px; bottom: -1px; width: 14px; height: 14px; background: #4e5e72; border-left: 1px solid #000; border-top: 1px solid #000; }
.thumb-vec { position: absolute; right: 0; bottom: 0; }
.thumb-white { height: 20px; background: #fff; border: 1px solid #111; }
.lname { margin-left: 10px; font-size: 12px; color: #ddd; }
.lname-bg { font-style: italic; font-size: 11px; }
.lname-lock { position: absolute; right: 16px; top: 8px; }

/* taskbar */
.taskbar { height: 8px; flex: none; display: flex; background: linear-gradient(90deg, #7e3a46 0, #8a4750 22.400%, #c08a90 22.600%, #c28c92 95.300%, #7a4557 95.400%); padding-left: 52px; gap: 4px; border-top: 1px solid #222; }
.task-btn { width: 58px; height: 7px; margin-top: 1px; background: #a8777e; border: 1px solid #caa; border-bottom: 0; }
.task-active { background: #c9a5ac; }

/* overlays */
.arrows { position: absolute; left: 0; top: 0; pointer-events: none; }
.watermark { position: absolute; left: 1105px; top: 716px; color: rgba(255,255,255,.68); fill: rgba(255,255,255,.68); }
.wm-top { display: flex; align-items: flex-end; height: 82px; }
.wm-bai { font: bold 60px/60px "Liberation Sans", sans-serif; margin-bottom: -2px; }
.wm-paw { position: relative; margin-left: 0; }
.wm-du { position: absolute; left: 20px; top: 47px; font: bold 32px/32px "Liberation Sans", sans-serif; color: #474747; }
.wm-jy { font-size: 43px; line-height: 44px; font-weight: bold; margin-bottom: 0; white-space: nowrap; }
.wm-url { font: 30px/32px "Open Sans", "Liberation Sans", sans-serif; margin-top: 6px; letter-spacing: .2px; white-space: nowrap; }
.imebar { position: absolute; left: 1238px; top: 838px; width: 202px; height: 22px; background: #fff; display: flex; align-items: center; gap: 7px; padding-left: 29px; }
.ime-s { position: absolute; left: -3px; top: -3px; width: 24px; height: 25px; background: #e95a22; color: #fff; font: bold 24px/25px "Liberation Sans", sans-serif; text-align: center; transform: rotate(-12deg); border-radius: 3px; }
.ime-t { color: #1e74bd; font-size: 15px; font-weight: bold; line-height: 20px; margin-right: 2px; }
.ime-p { color: #1e74bd; font: bold 13px/13px "Liberation Sans", sans-serif; width: 12px; }
```
